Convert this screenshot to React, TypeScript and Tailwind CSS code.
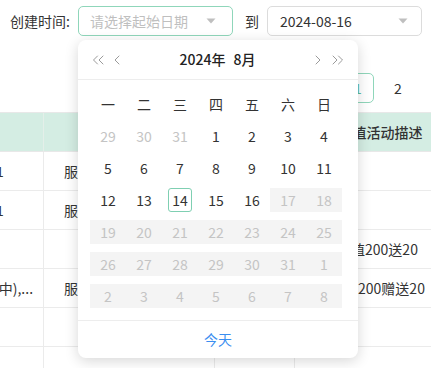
import React from "react";

const Chev = ({ dir, double }: { dir: "l" | "r"; double?: boolean }) => {
  const w = double ? 12 : 6;
  let d = "";
  if (dir === "l") {
    d = double ? "M5.5 1 L1.5 5 L5.5 9 M11 1 L7 5 L11 9" : "M5 1 L1 5 L5 9";
  } else {
    d = double ? "M1 1 L5 5 L1 9 M6.5 1 L10.5 5 L6.5 9" : "M1 1 L5 5 L1 9";
  }
  return (
    <svg width={w} height={10} viewBox={`0 0 ${w} 10`} fill="none">
      <path d={d} stroke="#9a9a9a" strokeWidth={1} strokeLinecap="round" strokeLinejoin="round" />
    </svg>
  );
};

const Tri = () => (
  <svg width={10} height={6} viewBox="0 0 10 6">
    <path d="M0.5 0.5 L9.5 0.5 L5 5.5 Z" fill="#bfbfbf" />
  </svg>
);

type Cell = { n: number; muted?: boolean; band?: boolean; sel?: boolean };

const rows: Cell[][] = [
  [
    { n: 29, muted: true },
    { n: 30, muted: true },
    { n: 31, muted: true },
    { n: 1 },
    { n: 2 },
    { n: 3 },
    { n: 4 },
  ],
  [{ n: 5 }, { n: 6 }, { n: 7 }, { n: 8 }, { n: 9 }, { n: 10 }, { n: 11 }],
  [
    { n: 12 },
    { n: 13 },
    { n: 14, sel: true },
    { n: 15 },
    { n: 16 },
    { n: 17, muted: true, band: true },
    { n: 18, muted: true, band: true },
  ],
  [19, 20, 21, 22, 23, 24, 25].map((n) => ({ n, muted: true, band: true })),
  [26, 27, 28, 29, 30, 31, 1].map((n) => ({ n, muted: true, band: true })),
  [2, 3, 4, 5, 6, 7, 8].map((n) => ({ n, muted: true, band: true })),
];

const weekdays = ["一", "二", "三", "四", "五", "六", "日"];

const tableRows = [
  { a: "2024-07-01", aCls: "whitespace-nowrap ml-[-68px]", b: "服务充值", d: "" },
  { a: "2024-07-01", aCls: "whitespace-nowrap ml-[-68px]", b: "服务充值", d: "" },
  { a: "", aCls: "whitespace-nowrap", b: "", d: "充值200送20" },
  { a: "状态(进行中),...", aCls: "whitespace-nowrap ml-[-62px]", b: "服务充值", d: "充值200赠送20" },
  { a: "", aCls: "whitespace-nowrap", b: "", d: "" },
  { a: "", aCls: "whitespace-nowrap", b: "", d: "" },
];

export default function App() {
  return (
    <div className="relative w-[431px] h-[368px] overflow-hidden bg-white text-[14px] text-[#333] font-['Noto_Sans_CJK_SC',sans-serif]">
      {/* filter row */}
      <div className="flex items-center pl-[10px] pt-[6px]">
        <span className="w-[60px] leading-[30px]">创建时间:</span>
        <div className="ml-[8px] flex h-[30px] w-[155px] items-center justify-between rounded-[5px] border border-[#8fd6ba] pl-[11px] pr-[16px]">
          <span className="text-[#bfbfbf]">请选择起始日期</span>
          <Tri />
        </div>
        <span className="ml-[12px] w-[14px]">到</span>
        <div className="ml-[8px] flex h-[30px] w-[155px] items-center justify-between rounded-[5px] border border-[#dcdcdc] pl-[12px] pr-[13px]">
          <span className="text-[#333]">2024-08-16</span>
          <Tri />
        </div>
      </div>

      {/* pager */}
      <div className="mt-[37px] flex justify-end gap-[8px] pr-[17px]">
        <div className="flex h-[30px] w-[32px] items-center justify-center rounded-[5px] border border-[#8fd6ba] text-[#5dbb98]">
          1
        </div>
        <div className="flex h-[30px] w-[32px] items-center justify-center text-[#333]">2</div>
      </div>

      {/* table */}
      <div className="mt-[9px] w-[470px] border-t border-[#e8e8e8]">
        <div className="grid h-[39px] grid-cols-[44px_171px_80px_175px] border-b border-[#e8e8e8] bg-[#d4ede3]">
          <div className="border-r border-[#e4efe9]" />
          <div className="border-r border-[#e4efe9]" />
          <div className="border-r border-[#e4efe9]" />
          <div className="flex items-center justify-center pr-[4px] font-medium text-[#333]">充值活动描述</div>
        </div>
        {tableRows.map((r, i) => (
          <div key={i} className="grid h-[39px] grid-cols-[44px_171px_80px_175px] border-b border-[#ebebeb]">
            <div className="flex items-center overflow-hidden border-r border-[#ebebeb]">
              <div className={r.aCls}>{r.a}</div>
            </div>
            <div className="flex items-center border-r border-[#ebebeb] pl-[20px] whitespace-nowrap overflow-hidden">
              {r.b}
            </div>
            <div className="border-r border-[#ebebeb]" />
            <div className="flex items-center justify-center pr-[10px] whitespace-nowrap">{r.d}</div>
          </div>
        ))}
      </div>

      {/* date popup */}
      <div className="absolute left-[78px] top-[40px] w-[280px] rounded-[8px] bg-white shadow-[0_3px_14px_rgba(0,0,0,0.16)]">
        <div className="flex h-[40px] items-center justify-between border-b border-[#ededed] px-[14px]">
          <div className="flex items-center gap-[10px]">
            <Chev dir="l" double />
            <Chev dir="l" />
          </div>
          <div className="flex items-center font-medium text-[#222]">
            <span>2024年</span>
            <span className="ml-[8px]">8月</span>
          </div>
          <div className="flex items-center gap-[11px]">
            <Chev dir="r" />
            <Chev dir="r" double />
          </div>
        </div>
        <div className="pl-[12px] pr-[16px] py-[8px]">
          <div className="grid h-[32px] grid-cols-7 items-center">
            {weekdays.map((w) => (
              <div key={w} className="text-center text-[#333]">
                {w}
              </div>
            ))}
          </div>
          {rows.map((row, ri) => (
            <div key={ri} className="grid h-[32px] grid-cols-7 items-center">
              {row.map((c, ci) => (
                <div
                  key={ci}
                  className={
                    c.band
                      ? "flex h-[24px] items-center justify-center bg-[#f4f4f4] text-[#c4c4c4]"
                      : c.muted
                      ? "flex h-[24px] items-center justify-center text-[#c4c4c4]"
                      : "flex h-[24px] items-center justify-center text-[#333]"
                  }
                >
                  {c.sel ? (
                    <span className="flex h-[24px] w-[24px] items-center justify-center rounded-[3px] border border-[#7fcfb2]">
                      {c.n}
                    </span>
                  ) : (
                    c.n
                  )}
                </div>
              ))}
            </div>
          ))}
        </div>
        <div className="flex h-[38px] items-center justify-center border-t border-[#ededed] text-[#3a8ef0]">
          今天
        </div>
      </div>
    </div>
  );
}
